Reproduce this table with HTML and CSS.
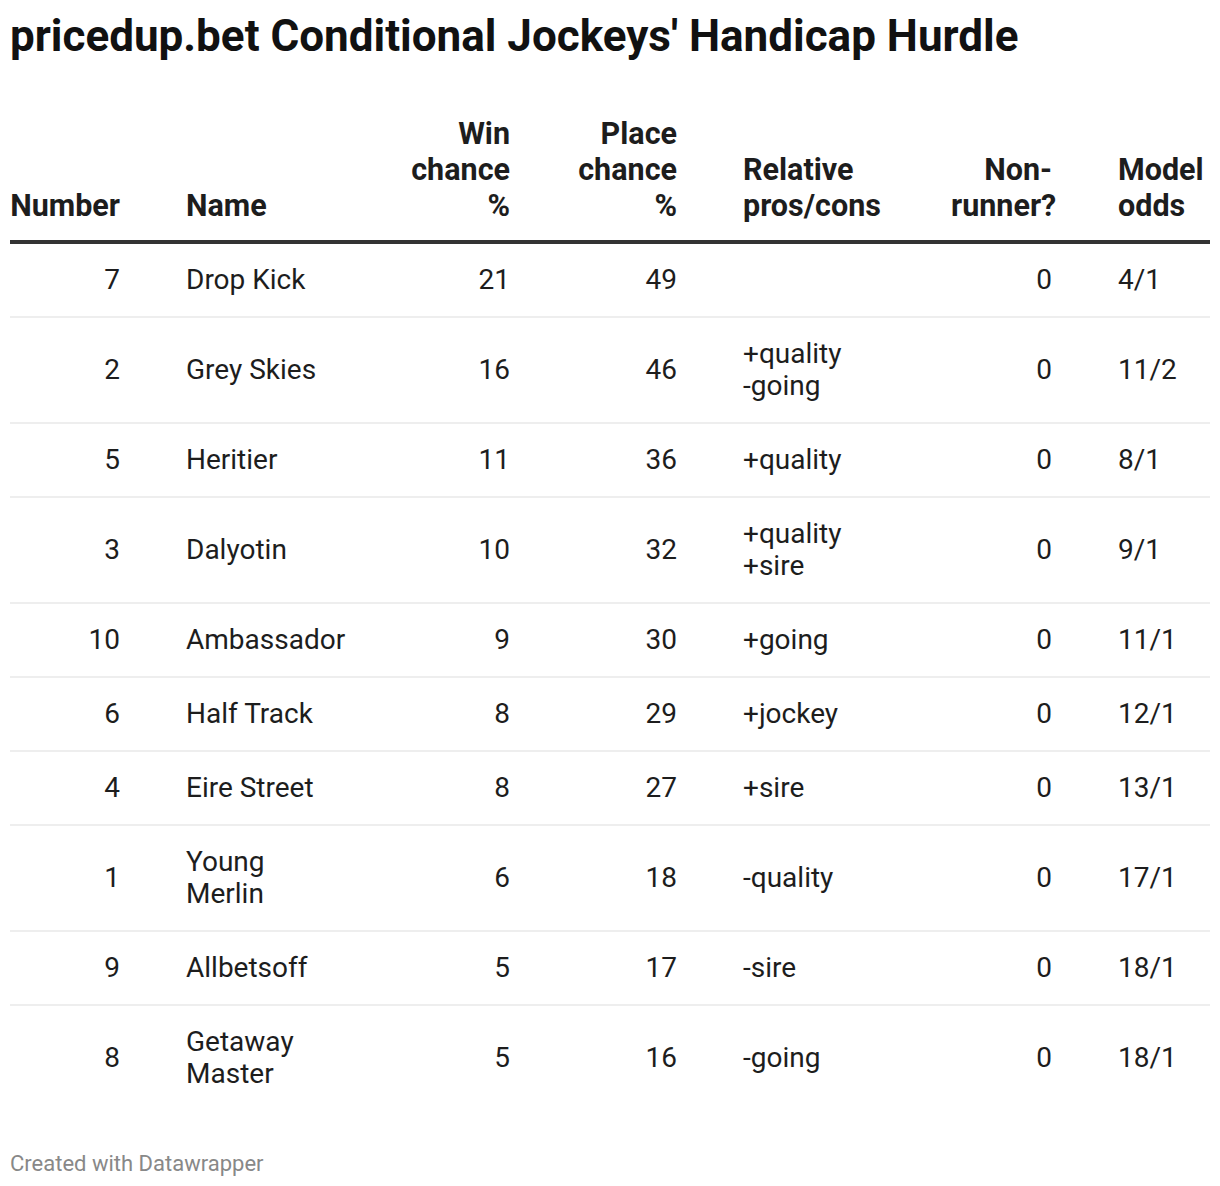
FILE: index.html
```html
<!DOCTYPE html>
<html>
<head>
<meta charset="utf-8">
<link rel="stylesheet" href="styles.css">
</head>
<body>
<div class="chart">
  <h1 class="title">pricedup.bet Conditional Jockeys' Handicap Hurdle</h1>
  <table class="tbl">
    <colgroup>
      <col class="c-num"><col class="c-name"><col class="c-win"><col class="c-place"><col class="c-rel"><col class="c-nr"><col class="c-odds">
    </colgroup>
    <thead>
      <tr>
        <th class="r first">Number</th>
        <th class="l">Name</th>
        <th class="r">Win<br>chance<br>%</th>
        <th class="r">Place<br>chance<br>%</th>
        <th class="l">Relative<br>pros/cons</th>
        <th class="r">Non-<br>runner?</th>
        <th class="l last">Model<br>odds</th>
      </tr>
    </thead>
    <tbody>
      <tr><td class="r first">7</td><td class="l">Drop Kick</td><td class="r">21</td><td class="r">49</td><td class="l"></td><td class="r">0</td><td class="l last">4/1</td></tr>
      <tr><td class="r first">2</td><td class="l">Grey Skies</td><td class="r">16</td><td class="r">46</td><td class="l">+quality<br>-going</td><td class="r">0</td><td class="l last">11/2</td></tr>
      <tr><td class="r first">5</td><td class="l">Heritier</td><td class="r">11</td><td class="r">36</td><td class="l">+quality</td><td class="r">0</td><td class="l last">8/1</td></tr>
      <tr><td class="r first">3</td><td class="l">Dalyotin</td><td class="r">10</td><td class="r">32</td><td class="l">+quality<br>+sire</td><td class="r">0</td><td class="l last">9/1</td></tr>
      <tr><td class="r first">10</td><td class="l">Ambassador</td><td class="r">9</td><td class="r">30</td><td class="l">+going</td><td class="r">0</td><td class="l last">11/1</td></tr>
      <tr><td class="r first">6</td><td class="l">Half Track</td><td class="r">8</td><td class="r">29</td><td class="l">+jockey</td><td class="r">0</td><td class="l last">12/1</td></tr>
      <tr><td class="r first">4</td><td class="l">Eire Street</td><td class="r">8</td><td class="r">27</td><td class="l">+sire</td><td class="r">0</td><td class="l last">13/1</td></tr>
      <tr><td class="r first">1</td><td class="l">Young<br>Merlin</td><td class="r">6</td><td class="r">18</td><td class="l">-quality</td><td class="r">0</td><td class="l last">17/1</td></tr>
      <tr><td class="r first">9</td><td class="l">Allbetsoff</td><td class="r">5</td><td class="r">17</td><td class="l">-sire</td><td class="r">0</td><td class="l last">18/1</td></tr>
      <tr class="lastrow"><td class="r first">8</td><td class="l">Getaway<br>Master</td><td class="r">5</td><td class="r">16</td><td class="l">-going</td><td class="r">0</td><td class="l last">18/1</td></tr>
    </tbody>
  </table>
  <div class="footer">Created with Datawrapper</div>
</div>
</body>
</html>
```
FILE: styles.css
```css
html, body {
  margin: 0;
  padding: 0;
  background: #ffffff;
}
body {
  font-family: Roboto, "Liberation Sans", sans-serif;
  color: #1d1d1d;
}
.chart {
  padding: 0 10px;
}
.title {
  margin: 0;
  padding-top: 10px;
  font-size: 44px;
  line-height: 52px;
  font-weight: 700;
  color: #111;
}
.tbl {
  margin-top: 54px;
  width: 1200px;
  border-collapse: collapse;
  table-layout: fixed;
}
.c-num { width: 143px; }
.c-name { width: 223px; }
.c-win { width: 167px; }
.c-place { width: 167px; }
.c-rel { width: 208px; }
.c-nr { width: 167px; }
.c-odds { width: 125px; }
th, td {
  padding: 0 33px;
}
th.first, td.first { padding-left: 0; }
th.last, td.last { padding-right: 0; }
.r { text-align: right; }
.l { text-align: left; }
th {
  font-size: 30.5px;
  line-height: 36px;
  font-weight: 700;
  vertical-align: bottom;
  padding-bottom: 16px;
  border-bottom: 4px solid #333;
}
td {
  font-size: 28px;
  line-height: 32px;
  font-weight: 400;
  padding-top: 20px;
  padding-bottom: 20px;
  vertical-align: middle;
  border-bottom: 2px solid #eeeeee;
}
.lastrow td { border-bottom: none; }
.footer {
  margin-top: 41px;
  font-size: 22px;
  line-height: 26px;
  color: #888888;
}
```
